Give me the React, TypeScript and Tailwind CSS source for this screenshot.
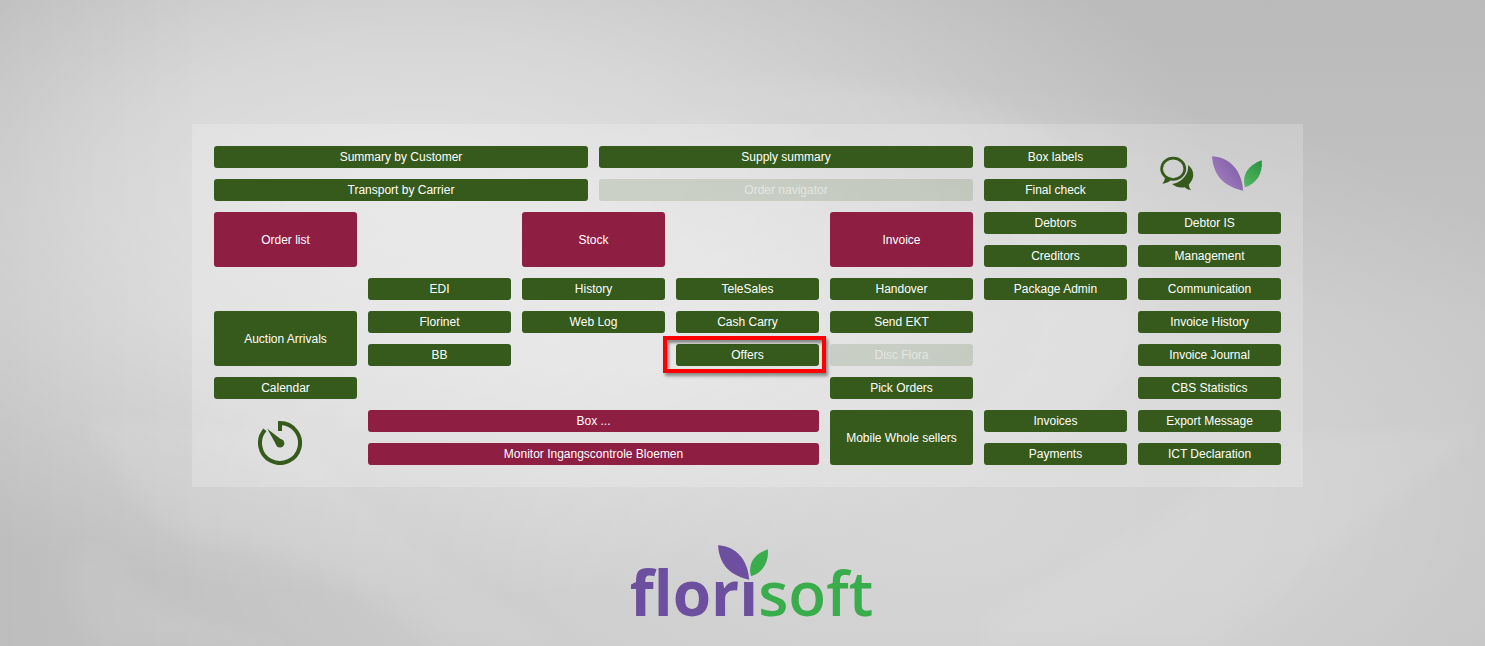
import type { ReactNode } from "react";

type Tone = "green" | "red" | "muted";

type Tile = { label: string; tone?: Tone; place: string; marked?: boolean };

const tones: Record<Tone, string> = {
  green: "bg-[#355a1b] text-white hover:bg-[#41702a]",
  red: "bg-[#8f1e43] text-white hover:bg-[#a62a52]",
  muted: "bg-[#355a1b]/15 text-white/50",
};

const tiles: Tile[] = [
  { label: "Summary by Customer", place: "col-start-1 col-span-5 row-start-1" },
  { label: "Supply summary", place: "col-start-6 col-span-5 row-start-1" },
  { label: "Box labels", place: "col-start-11 col-span-2 row-start-1" },
  { label: "Transport by Carrier", place: "col-start-1 col-span-5 row-start-2" },
  { label: "Order navigator", tone: "muted", place: "col-start-6 col-span-5 row-start-2" },
  { label: "Final check", place: "col-start-11 col-span-2 row-start-2" },
  { label: "Order list", tone: "red", place: "col-start-1 col-span-2 row-start-3 row-span-2" },
  { label: "Stock", tone: "red", place: "col-start-5 col-span-2 row-start-3 row-span-2" },
  { label: "Invoice", tone: "red", place: "col-start-9 col-span-2 row-start-3 row-span-2" },
  { label: "Debtors", place: "col-start-11 col-span-2 row-start-3" },
  { label: "Debtor IS", place: "col-start-13 col-span-2 row-start-3" },
  { label: "Creditors", place: "col-start-11 col-span-2 row-start-4" },
  { label: "Management", place: "col-start-13 col-span-2 row-start-4" },
  { label: "EDI", place: "col-start-3 col-span-2 row-start-5" },
  { label: "History", place: "col-start-5 col-span-2 row-start-5" },
  { label: "TeleSales", place: "col-start-7 col-span-2 row-start-5" },
  { label: "Handover", place: "col-start-9 col-span-2 row-start-5" },
  { label: "Package Admin", place: "col-start-11 col-span-2 row-start-5" },
  { label: "Communication", place: "col-start-13 col-span-2 row-start-5" },
  { label: "Auction Arrivals", place: "col-start-1 col-span-2 row-start-6 row-span-2" },
  { label: "Florinet", place: "col-start-3 col-span-2 row-start-6" },
  { label: "Web Log", place: "col-start-5 col-span-2 row-start-6" },
  { label: "Cash Carry", place: "col-start-7 col-span-2 row-start-6" },
  { label: "Send EKT", place: "col-start-9 col-span-2 row-start-6" },
  { label: "Invoice History", place: "col-start-13 col-span-2 row-start-6" },
  { label: "BB", place: "col-start-3 col-span-2 row-start-7" },
  { label: "Disc Flora", tone: "muted", place: "col-start-9 col-span-2 row-start-7" },
  { label: "Offers", place: "col-start-7 col-span-2 row-start-7", marked: true },
  { label: "Invoice Journal", place: "col-start-13 col-span-2 row-start-7" },
  { label: "Calendar", place: "col-start-1 col-span-2 row-start-8" },
  { label: "Pick Orders", place: "col-start-9 col-span-2 row-start-8" },
  { label: "CBS Statistics", place: "col-start-13 col-span-2 row-start-8" },
  { label: "Box ...", tone: "red", place: "col-start-3 col-span-6 row-start-9" },
  { label: "Mobile Whole sellers", place: "col-start-9 col-span-2 row-start-9 row-span-2" },
  { label: "Invoices", place: "col-start-11 col-span-2 row-start-9" },
  { label: "Export Message", place: "col-start-13 col-span-2 row-start-9" },
  { label: "Monitor Ingangscontrole Bloemen", tone: "red", place: "col-start-3 col-span-6 row-start-10" },
  { label: "Payments", place: "col-start-11 col-span-2 row-start-10" },
  { label: "ICT Declaration", place: "col-start-13 col-span-2 row-start-10" },
];

function TileButton({ tile }: { tile: Tile }) {
  const tone = tile.tone ?? "green";
  return (
    <div className={`relative flex ${tile.place}`}>
      <button
        type="button"
        disabled={tone === "muted"}
        className={`flex-1 rounded-[3px] text-center text-xs ${tones[tone]}`}
      >
        {tile.label}
      </button>
      {tile.marked && (
        <span className="pointer-events-none absolute -top-2 -right-[7px] -bottom-[7px] -left-[13px] border-4 border-[#fe0000] shadow-[2px_3px_3px_rgba(0,0,0,0.4),inset_2px_3px_3px_rgba(0,0,0,0.4)]" />
      )}
    </div>
  );
}

function IconButton({ label, children }: { label: string; children: ReactNode }) {
  return (
    <button type="button" aria-label={label} className="shrink-0">
      {children}
    </button>
  );
}

function ChatIcon() {
  return (
    <svg viewBox="0 0 34 35" className="h-[35px] w-[34px]" fill="#355a1b" aria-hidden="true">
      <ellipse cx="13.2" cy="12.8" rx="11.6" ry="10.7" fill="none" stroke="#355a1b" strokeWidth="2.7" />
      <path d="M4.500 19.500C5.500 22 4.800 24.500 2.300 27.800C6 27.600 9 26.500 11.500 23.600Z" />
      <path d="M28 9C32.500 12 34.500 18 32.500 22.800C31.800 25 30.300 27 28.800 28.400C29 30.500 29.600 32.500 31.200 34.200C28.500 34 26.500 33 24.800 31.300C20 32 15.500 31 12 28C19 27.500 29.500 20 28 9Z" />
    </svg>
  );
}

function Leaves({ soft = false }: { soft?: boolean }) {
  return (
    <svg viewBox="0 0 51 35" className="h-[35px] w-[51px]" aria-hidden="true">
      <defs>
        <linearGradient id="leafViolet" x1="0.2" y1="0.8" x2="0.8" y2="0.3">
          <stop offset="0" stopColor="#a07dc0" />
          <stop offset="1" stopColor="#8562a9" />
        </linearGradient>
        <linearGradient id="leafGreen" x1="0.8" y1="0" x2="0.2" y2="1">
          <stop offset="0" stopColor="#2c9440" />
          <stop offset="1" stopColor="#52b660" />
        </linearGradient>
      </defs>
      <path d="M0 0.300C14 1 29 10 31.200 34.700C16 31.500 1.500 23 0 0.300Z" fill={soft ? "url(#leafViolet)" : "#6c4f9f"} />
      <path d="M49.800 4.300C39.500 8 29 16 33 31.300C44 28 51 18 49.800 4.300Z" fill={soft ? "url(#leafGreen)" : "#39ac4b"} />
    </svg>
  );
}

function TimerIcon() {
  return (
    <svg viewBox="0 0 44 44" className="h-11 w-11" aria-hidden="true">
      <path d="M22 10V2A20 20 0 1 1 6.900 8.900" fill="none" stroke="#355a1b" strokeWidth="4" />
      <path d="M9.200 7.800L23.500 18.800L18.400 24Z" fill="#355a1b" />
      <circle cx="22" cy="22.300" r="4.300" fill="#355a1b" />
    </svg>
  );
}

function Backdrop() {
  return (
    <svg
      className="absolute inset-0 -z-10 h-full w-full"
      viewBox="0 0 1485 646"
      preserveAspectRatio="none"
      aria-hidden="true"
    >
      <defs>
        <linearGradient id="base" x1="0" y1="0" x2="0" y2="1">
          <stop offset="0" stopColor="#bababa" />
          <stop offset="0.500" stopColor="#c5c5c5" />
          <stop offset="1" stopColor="#c3c3c3" />
        </linearGradient>
        <radialGradient id="glowLeft" gradientUnits="userSpaceOnUse" cx="0" cy="0" r="1" gradientTransform="translate(420 200) scale(800 400)">
          <stop offset="0" stopColor="#ffffff" stopOpacity="0.560" />
          <stop offset="0.400" stopColor="#ffffff" stopOpacity="0.400" />
          <stop offset="1" stopColor="#ffffff" stopOpacity="0" />
        </radialGradient>
        <radialGradient id="glowRight" gradientUnits="userSpaceOnUse" cx="0" cy="0" r="1" gradientTransform="translate(930 500) scale(760 420)">
          <stop offset="0" stopColor="#ffffff" stopOpacity="0.320" />
          <stop offset="0.500" stopColor="#ffffff" stopOpacity="0.220" />
          <stop offset="1" stopColor="#ffffff" stopOpacity="0" />
        </radialGradient>
        <linearGradient id="edge" x1="0" y1="0" x2="1" y2="0">
          <stop offset="0" stopColor="#000000" stopOpacity="0.030" />
          <stop offset="0.140" stopColor="#000000" stopOpacity="0" />
        </linearGradient>
        <filter id="haze" x="-20%" y="-20%" width="140%" height="140%">
          <feGaussianBlur stdDeviation="8" />
        </filter>
      </defs>
      <rect width="1485" height="646" fill="url(#base)" />
      <rect width="1485" height="646" fill="url(#glowLeft)" />
      <rect width="1485" height="646" fill="url(#glowRight)" />
      <rect width="1485" height="646" fill="url(#edge)" />
      <g filter="url(#haze)">
        <path d="M70 560C85 535 110 550 130 575S210 630 300 646H100C75 620 65 590 70 560Z" fill="#ffffff" fillOpacity="0.060" />
        <path d="M90 420C120 480 160 540 200 542S300 545 440 646H560C430 560 350 500 300 440Z" fill="#ffffff" fillOpacity="0.070" />
        <path d="M985 620C1100 560 1200 500 1260 440L1480 430C1400 500 1300 570 1210 646H985Z" fill="#ffffff" fillOpacity="0.060" />
        <path d="M990 440C1120 450 1180 330 1130 220S900 60 700 90C950 120 1060 230 1040 330S930 430 830 440Z" fill="#ffffff" fillOpacity="0.060" />
      </g>
    </svg>
  );
}

export default function App() {
  return (
    <main className="relative isolate flex min-h-screen flex-col bg-[#d2d2d2] pt-31 font-['Liberation_Sans',Arial,sans-serif]">
      <Backdrop />
      <section className="mr-[182px] ml-[192px] bg-white/20 p-[22px]">
        <div className="grid auto-rows-[22px] grid-cols-[repeat(14,minmax(0,1fr))] gap-[11px]">
          {tiles.map((tile) => (
            <TileButton key={tile.label} tile={tile} />
          ))}
          <div className="col-span-2 col-start-13 row-span-2 row-start-1 flex items-center justify-center gap-[18px] pl-1">
            <IconButton label="Chat">
              <ChatIcon />
            </IconButton>
            <IconButton label="Florisoft">
              <Leaves soft />
            </IconButton>
          </div>
          <div className="col-span-2 col-start-1 row-span-2 row-start-9 flex items-center justify-center pt-[10px] pr-3">
            <IconButton label="Timer">
              <TimerIcon />
            </IconButton>
          </div>
        </div>
      </section>
      <footer className="flex justify-center pt-[58px] pl-[18px]">
        <div className="relative">
          <p className="pt-[10px] font-['Open_Sans',sans-serif] text-[62px] leading-[74px] font-semibold whitespace-nowrap">
            <span className="font-bold text-[#6c4f9f]">florı</span>
            <span className="text-[#39ac4b]">soft</span>
          </p>
          <div className="absolute top-0 left-[88px]">
            <Leaves />
          </div>
        </div>
      </footer>
    </main>
  );
}
